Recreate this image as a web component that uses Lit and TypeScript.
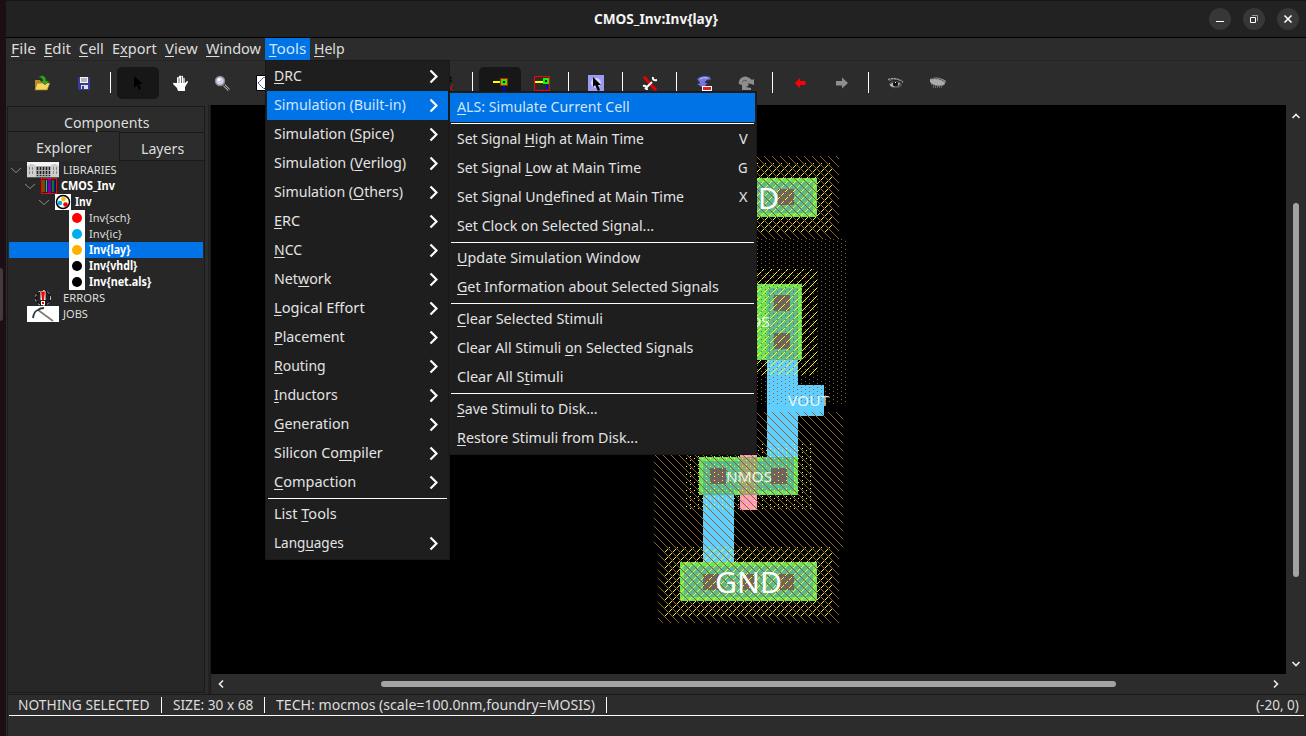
import { LitElement, html, svg, css, nothing } from "lit";
import { customElement, property } from "lit/decorators.js";
import { classMap } from "lit/directives/class-map.js";
import { styleMap } from "lit/directives/style-map.js";

/** Text squeezed or stretched to a given width; `mn` is the index of the underlined mnemonic letter. */
@customElement("fit-label")
class FitLabel extends LitElement {
  static styles = css`
    :host { display: block; flex: none; white-space: pre; }
    .t { display: inline-block; transform-origin: 0 50%; }
    .u { text-decoration: underline; text-underline-offset: 2px; text-decoration-thickness: 1px; text-decoration-skip-ink: none; }
  `;
  @property() text = "";
  @property({ type: Number }) w = 0;
  @property({ type: Number }) mn = -1;
  firstUpdated() {
    const t = this.renderRoot.querySelector(".t") as HTMLElement;
    this.style.width = this.w + "px";
    t.style.transform = `scaleX(${this.w / t.offsetWidth})`;
  }
  render() {
    const { text: s, mn } = this;
    return mn < 0
      ? html`<span class="t">${s}</span>`
      : html`<span class="t">${s.slice(0, mn)}<span class="u">${s[mn]}</span>${s.slice(mn + 1)}</span>`;
  }
}

const label = (text: string, w: number, mn = -1) => html`<fit-label .text=${text} .w=${w} .mn=${mn}></fit-label>`;

/** Single-pixel stipple over a rectangle, kept where `on` holds. */
const stipple = (x0: number, y0: number, x1: number, y1: number, fill: string, on: (x: number, y: number) => boolean) => {
  let d = "";
  for (let y = y0; y < y1; y++) for (let x = x0; x < x1; x++) if (on(x, y)) d += `M${x} ${y}h1v1h-1z`;
  return svg`<path d=${d} fill=${fill} />`;
};
const down = (x: number, y: number) => (x - y + 8000) % 8 === 0;
const up = (x: number, y: number) => (x + y) % 8 === 0;
const sparse = (x: number, y: number) => (y % 4 === 3 && x % 8 === 1) || (y % 4 === 1 && x % 8 === 5);
const dotted = (x: number, y: number) => (y % 4 === 0 && x % 8 === 2) || (y % 4 === 2 && x % 8 === 6);

/** Chip layout drawing. */
@customElement("layout-view")
class LayoutView extends LitElement {
  static styles = css`
    :host { display: block; background: #000; overflow: hidden; }
    svg { display: block; font-family: "Noto Sans", sans-serif; }
  `;
  render() {
    const r = (x: number, y: number, x2: number, y2: number, fill: string) =>
      svg`<rect x=${x} y=${y} width=${x2 - x} height=${y2 - y} fill=${fill} />`;
    const G = "#69e45f", T = "#5abb92", B = "#60cfff", K = "#6c6464", Y = "#ffff00", N = "#8b632e";
    return html`<svg width="1075" height="569" viewBox="211 105 1075 569" shape-rendering="crispEdges">
      ${r(680, 178, 817, 217, G)}${r(684, 182, 813, 213, T)}
      ${r(703, 189, 719, 205, K)}${r(741, 189, 757, 205, K)}${r(778, 189, 794, 205, K)}
      ${r(696, 284, 802, 360, G)}${r(767, 288, 798, 356, T)}
      ${r(767, 356, 798, 458, B)}${r(767, 356, 798, 360, T)}${r(798, 385, 824, 416, B)}
      ${r(774, 295, 790, 311, K)}${r(774, 333, 790, 349, K)}
      ${r(703, 495, 734, 562, B)}
      ${r(740, 455, 757, 510, "#ff9bc0")}
      ${r(699, 457, 798, 495, G)}${r(703, 461, 734, 495, T)}${r(763, 457, 794, 491, T)}${r(734, 461, 763, 491, T)}
      ${r(740, 457, 757, 495, "#9ba57c")}
      ${r(710, 468, 726, 484, K)}${r(771, 468, 787, 484, K)}
      ${r(680, 562, 817, 601, G)}${r(684, 566, 813, 597, T)}
      ${r(703, 574, 719, 590, K)}${r(741, 574, 757, 590, K)}${r(778, 574, 794, 590, K)}
      ${stipple(665, 163, 832, 232, Y, up)}${stipple(680, 269, 817, 375, Y, up)}
      ${stipple(686, 443, 811, 510, Y, dotted)}${stipple(665, 547, 832, 616, Y, up)}
      ${stipple(654, 239, 847, 405, N, sparse)}${stipple(658, 156, 839, 239, N, down)}
      ${stipple(654, 412, 843, 547, N, down)}${stipple(658, 547, 839, 623, N, down)}
      <g fill="#fff">
        <text x="758" y="209" font-size="29">D</text>
        <text x="715" y="593" font-size="29" textLength="67" lengthAdjust="spacingAndGlyphs">GND</text>
        <text x="726" y="482" font-size="15" textLength="46" lengthAdjust="spacingAndGlyphs" opacity=".85">NMOS</text>
        <text x="725" y="327" font-size="15" textLength="45" lengthAdjust="spacingAndGlyphs" opacity=".85">PMOS</text>
        <text x="788" y="406" font-size="15" textLength="41" lengthAdjust="spacingAndGlyphs" opacity=".85">VOUT</text>
      </g>
    </svg>`;
  }
}

const ICONS: Record<string, unknown> = {
  open: svg`<path d="M1 5h5l1 2h7v8H1z" fill="#b98e24"/><path d="M3 8h13l-3 7H1z" fill="#f5d566" stroke="#9a7420" stroke-width=".7"/><path d="M5 2c4-3 7 0 7 4h3l-4 4-4-4h2c0-2-1-3-4-4z" fill="#35a51d" stroke="#176b0c" stroke-width=".5"/>`,
  save: svg`<path d="M2 2h12v13H3l-1-1z" fill="#3a3a9c"/><path d="M4 2h8v6H4z" fill="#f4f4f4"/><path d="M5 4h6M5 6h6" stroke="#777"/><path d="M5 10h7v4H5z" fill="#ddd"/><path d="M6 11h2v3H6z" fill="#3a3a9c"/>`,
  arrow: svg`<path d="M4 1v12l3-3 2 5 2-1-2-5h4z" fill="#000"/>`,
  hand: svg`<path d="M5 8V3q0-1 1-1t1 1V1q1-1 2 0v1q1-2 2-1v2q2-1 2 1v4l2-2q1 0 1 1l-3 5v4H6l-1-3-4-4q0-2 2-1z" fill="#fff"/><path d="M7 3v5M9.500 2v6M12 3v5" stroke="#333" stroke-width=".7"/>`,
  zoom: svg`<path d="M10 10l5 5" stroke="#999" stroke-width="3"/><path d="M10 10l5 5" stroke="#333"/><circle cx="6" cy="6" r="4.500" fill="#cfcfec" stroke="#888" stroke-width="1.500"/><circle cx="5" cy="4.500" r="1.500" fill="#fff"/>`,
  fit: svg`<path d="M.5.5h15v15H.5z" fill="#fff" stroke="#000"/><path d="M2 8l6-6 6 6-6 6z" fill="none" stroke="#228" stroke-dasharray="2 1"/>`,
  grid: svg`<path d="M11 3h3M11 6h3M12 1v7" stroke="#000"/><path d="M15 10l-3 3 3 3" fill="none" stroke="#f00"/>`,
  wire: svg`<path d="M1 6h7v2H1z" fill="#ff0"/><path d="M11 11h2v5h-2z" fill="#00f"/><path d="M8 3h8v8H8z" fill="#f00"/><path d="M9 4h6v6H9z" fill="#0f0"/><path d="M11 6h2v2h-2z" fill="#000"/>`,
  wirebox: svg`<path d="M.5 1.500h15v14H.5z" fill="none" stroke="#f00"/><path d="M1 6h8v2H1z" fill="#ff0"/><path d="M12 10h2v4h-2z" fill="#00f"/><path d="M9 3h6v6H9z" fill="#0f0"/><path d="M11 5h2v2h-2z" fill="#000"/>`,
  select: svg`<path d="M0 0h16v16H0z" fill="#9b9bf4"/><circle cx="8" cy="8" r="5" fill="#d5d5ff"/><path d="M5 2v10l2-2 3 6 2-1-2-5h3z" fill="#000"/>`,
  tools: svg`<path d="M1 1l3 1 7 8-2 2-7-8z" fill="#e00"/><path d="M10 11l4 4" stroke="#e00" stroke-width="3"/><path d="M11 2q-1 4 4 3M3 14l7-7M1 11q4-1 4 4" fill="none" stroke="#fff" stroke-width="2"/>`,
  undo: svg`<path d="M1 4q5-5 13-2l1 3q-5-1-6 3h3l-5 5-6-4 3-1z" fill="#7777d5" stroke="#33338a" stroke-width=".6"/><path d="M4 4q3-2 8-1" stroke="#c4c4f4" fill="none"/><path d="M6 11h10v5H6z" fill="#fff"/><path d="M7 12h8v3H7z" fill="#d22"/>`,
  redo: svg`<path d="M16 4l-2 1Q8-1 3 3 0 6 1 9l3 1v5h9v-2l-5-1q4-1 2-4l6 2z" fill="#8e8e8e"/><path d="M4 7q2-3 5-1" stroke="#555" fill="none"/>`,
  back: svg`<path d="M3 8l5-5v3h5.500v4H8v3z" fill="#f00"/>`,
  fwd: svg`<path d="M14 8L8 2.500V6H2v4.500h6v3z" fill="#8e8e8e"/>`,
  eye: svg`<path d="M0 5q4-3 9-2t7 4l-3 1 1 2q-3 4-8 3-4-1-5-4l1-2z" fill="#555"/><path d="M0 4.500q7-3 15 3" stroke="#bbb" stroke-dasharray="2 1" fill="none"/><path d="M2 9.500Q6 6 12 8.500q-2 3.500-6 3.500T2 9.500z" fill="#bdbdbd"/><circle cx="7.500" cy="9" r="2.600" fill="#111"/><path d="M7 7h1v1H7z" fill="#fff"/><path d="M1 7.500q6-4 13 0" stroke="#1a1a1a" fill="none"/>`,
  shut: svg`<path d="M0 4q7-4 16 2l-2 4q-7 2-12-1L0 7z" fill="#aaa"/><path d="M1 4q7-2 14 3" stroke="#555" fill="none"/><path d="M1 9q7 4 14 0M3 12h10" stroke="#999" stroke-dasharray="1 1" fill="none"/>`,
};

type Tool = string | { gap: number };
const TOOLS: Tool[] = ["open", "save", "|", "*arrow", "hand", "zoom", "fit", { gap: 140 }, "grid", "|", "*wire", "wirebox", "|", "select", "|", "tools", "|", "undo", "redo", "|", "back", "fwd", "|", "eye", "shut"];

@customElement("tool-bar")
class ToolBar extends LitElement {
  static styles = css`
    :host { display: flex; height: 45px; padding: 6px 0 0 15px; box-sizing: border-box; border-top: 1px solid #262626; background: #2c2c2c; }
    .b { width: 42px; height: 32px; display: grid; place-items: center; border-radius: 5px; box-sizing: border-box; }
    .on { background: #171717; }
    .sep { width: 1px; height: 21px; margin: 5px 6px 0 5px; background: #fff; }
    svg { width: 16px; height: 16px; display: block; }
  `;
  render() {
    return TOOLS.map(t =>
      typeof t !== "string"
        ? html`<div style=${styleMap({ width: t.gap + "px" })}></div>`
        : t === "|"
          ? html`<div class="sep"></div>`
          : html`<div class=${classMap({ b: true, on: t[0] === "*" })}><svg viewBox="0 0 16 16">${ICONS[t.replace("*", "")]}</svg></div>`);
  }
}

type Item = null | { t: string; w: number; m?: number; key?: string; kw?: number; sub?: boolean; hot?: boolean };

@customElement("pop-menu")
class PopMenu extends LitElement {
  static styles = css`
    :host { display: block; box-sizing: border-box; background: #1e1e1e; border: 1px solid #181818; padding: 1px; color: #e3e3e3; font: 14.5px/27px "Noto Sans", sans-serif; }
    .i { display: flex; justify-content: space-between; height: 29px; padding: 0 7px; }
    .hot { background: #0073e6; color: #cfe5fb; }
    .s { height: 1px; margin: 1px; background: #fff; }
    svg { width: 9px; height: 15px; margin: 7px 3px 0 0; }
  `;
  @property({ attribute: false }) items: Item[] = [];
  render() {
    return this.items.map(i => i === null
      ? html`<div class="s"></div>`
      : html`<div class=${classMap({ i: true, hot: !!i.hot })}>${label(i.t, i.w, i.m ?? -1)}
          ${i.key ? label(i.key, i.kw!) : nothing}
          ${i.sub ? html`<svg viewBox="0 0 9 15"><path d="M1.500 1.500l6 6-6 6" fill="none" stroke="#fff" stroke-width="2.200"/></svg>` : nothing}
        </div>`);
  }
}

const s = (t: string, w: number, m?: number, hot = false): Item => ({ t, w, m, sub: true, hot });
const MAIN: Item[] = [
  s("DRC", 28, 0), s("Simulation (Built-in)", 132, undefined, true), s("Simulation (Spice)", 120, 12), s("Simulation (Verilog)", 132, 12),
  s("Simulation (Others)", 129, 12), s("ERC", 26, 0), s("NCC", 28, 0), s("Network", 57, 3), s("Logical Effort", 91, 0), s("Placement", 71, 0),
  s("Routing", 52, 0), s("Inductors", 64, 0), s("Generation", 75, 0), s("Silicon Compiler", 109, 10), s("Compaction", 82, 0),
  null, { t: "List Tools", w: 63, m: 5 }, s("Languages", 70, 4),
];
const SUB: Item[] = [
  { t: "ALS: Simulate Current Cell", w: 173, m: 0, hot: true }, null,
  { t: "Set Signal High at Main Time", w: 187, m: 11, key: "V", kw: 9 },
  { t: "Set Signal Low at Main Time", w: 184, m: 11, key: "G", kw: 10 },
  { t: "Set Signal Undefined at Main Time", w: 227, m: 13, key: "X", kw: 9 },
  { t: "Set Clock on Selected Signal...", w: 197 }, null,
  { t: "Update Simulation Window", w: 183, m: 0 }, { t: "Get Information about Selected Signals", w: 262, m: 0 }, null,
  { t: "Clear Selected Stimuli", w: 146, m: 0 }, { t: "Clear All Stimuli on Selected Signals", w: 236, m: 18 }, { t: "Clear All Stimuli", w: 106, m: 11 }, null,
  { t: "Save Stimuli to Disk...", w: 141, m: 0 }, { t: "Restore Stimuli from Disk...", w: 181, m: 0 },
];

const dot = (c: string) => html`<svg width="16" height="16"><path d="M0 0h16v16H0z" fill="#fff"/><circle cx="8" cy="8" r="5" fill=${c} /></svg>`;
const TREE_ICONS: Record<string, unknown> = {
  lib: html`<svg width="32" height="16"><path d="M0 0h32v16H0z" fill="#f4f4f4"/><path d="M0 4l3-2h3l3 2h14l3-2h3l3 2v11H0z" fill="#cfcfcf"/><path d="M2.500 5v8M5.500 5v8M26.500 5v8M29.500 5v8" stroke="#888" stroke-dasharray="3 1"/><path d="M9 4h14v11H9z" fill="#aaa"/><path d="M10.500 5v9M13.500 5v9M16.500 5v9M19.500 5v9M22.500 5v9" stroke="#222" stroke-width="1.500" stroke-dasharray="3 1"/><path d="M0 15.500h32" stroke="#555"/></svg>`,
  book: html`<svg width="16" height="16"><path d="M0 0h16v16H0z" fill="#f00"/><path d="M1 1h14v14H1z" fill="#222"/><path d="M1 2h3v12H1z" fill="#7b4a00"/><path d="M5 2h1v12H5z" fill="#2aaee8"/><path d="M7 1h3v14H7z" fill="#7300a8"/><path d="M11 2h2v12h-2z" fill="#0a7a1c"/><path d="M14 2h1v13h-1z" fill="#00c"/></svg>`,
  cell: html`<svg width="16" height="16"><path d="M0 0h16v16H0z" fill="#fff"/><circle cx="8" cy="8" r="6.500" fill="#fff" stroke="#000" stroke-width="1.500"/><circle cx="8.500" cy="5" r="2.300" fill="#fb0"/><circle cx="5" cy="9" r="2.300" fill="#00aeef"/><circle cx="10.500" cy="10.500" r="2.300" fill="#e00"/></svg>`,
  err: html`<svg width="32" height="16"><circle cx="16" cy="8" r="7" fill="#222" stroke="#000"/><circle cx="16" cy="8" r="7.500" fill="none" stroke="#fff" stroke-width=".8" stroke-dasharray="2 3"/><path d="M13.500 1h5v9h-5zM14 11h4v4h-4z" fill="#fff"/><path d="M14 1.500h4l-1 8.500h-2zM15 12h2v2h-2z" fill="#f00"/></svg>`,
  job: html`<svg width="32" height="16"><path d="M0 0h32v16H0z" fill="#fff"/><path d="M11 4l15 11" stroke="#7c7c68" stroke-width="1.600"/><path d="M6 12Q7 5 11 4q2-2 6-2" fill="none" stroke="#2a3a3a" stroke-width="1.800"/></svg>`,
  sch: dot("#f00"), ic: dot("#00aeef"), lay: dot("#ffb000"), blk: dot("#000"),
};
const ROWS = [
  { d: 0, i: "lib", t: "LIBRARIES", w: 54, open: true },
  { d: 1, i: "book", t: "CMOS_Inv", w: 54, b: true, open: true },
  { d: 2, i: "cell", t: "Inv", w: 17, b: true, open: true },
  { d: 3, i: "sch", t: "Inv{sch}", w: 42 },
  { d: 3, i: "ic", t: "Inv{ic}", w: 33 },
  { d: 3, i: "lay", t: "Inv{lay}", w: 41, b: true, hot: true },
  { d: 3, i: "blk", t: "Inv{vhdl}", w: 48, b: true },
  { d: 3, i: "blk", t: "Inv{net.als}", w: 62, b: true },
  { d: 0, i: "err", t: "ERRORS", w: 42 },
  { d: 0, i: "job", t: "JOBS", w: 25 },
];

@customElement("side-panel")
class SidePanel extends LitElement {
  static styles = css`
    :host { display: flex; flex-direction: column; box-sizing: border-box; width: 198px; height: 587px; border: 1px solid #1a1a1a; background: #272727; color: #ddd; font: 14.500px "Noto Sans", sans-serif; }
    .comp { height: 24px; display: flex; justify-content: center; background: #2c2c2c; line-height: 30px; }
    .tabs { display: flex; height: 30px; background: #2c2c2c; }
    .ex { width: 111px; border-top: 1px solid #1a1a1a; display: flex; justify-content: center; line-height: 31px; }
    .ly { flex: 1; margin-top: 1px; height: 27px; border: 1px solid #1a1a1a; border-right: 0; display: flex; justify-content: center; line-height: 31px; }
    .tree { display: flex; flex-direction: column; padding: 1px 1px 0; font-size: 11.5px; line-height: 16px; }
    .row { display: flex; height: 16px; }
    .b { font-weight: 700; color: #fff; }
    .hot { background: #0073e6; }
    .tw { width: 18px; height: 16px; flex: none; }
    .ic { flex: none; height: 16px; margin-right: 4px; }
    svg { display: block; }
  `;
  render() {
    return html`
      <div class="comp">${label("Components", 85)}</div>
      <div class="tabs"><div class="ex">${label("Explorer", 56)}</div><div class="ly">${label("Layers", 43)}</div></div>
      <div class="tree">${ROWS.map(r => html`
        <div class=${classMap({ row: true, b: !!r.b, hot: !!r.hot })}>
          <div style=${styleMap({ width: r.d * 14 + "px" })}></div>
          <div class="tw">${r.open ? html`<svg width="14" height="16"><path d="M2 6l5 4.500L12 6" fill="none" stroke="#8a8a8a"/></svg>` : nothing}</div>
          <div class="ic">${TREE_ICONS[r.i]}</div>
          ${label(r.t, r.w)}
        </div>`)}</div>`;
  }
}

const MENUS: [string, number][] = [["File", 25], ["Edit", 27], ["Cell", 25], ["Export", 45], ["View", 33], ["Window", 55], ["Tools", 37], ["Help", 31]];

@customElement("app-root")
class AppRoot extends LitElement {
  static styles = css`
    :host { display: flex; position: relative; width: 1306px; height: 736px; overflow: hidden; background: #1d0f15; font: 14.5px "Noto Sans", sans-serif; color: #ddd; }
    .edge { width: 6px; flex: none; padding-top: 268px; box-sizing: border-box; background: #1b0f15; }
    .dock { width: 3px; height: 53px; background: #433a40; border-radius: 0 4px 4px 0; }
    .win { width: 1300px; height: 736px; background: #2c2c2c; }
    .title { box-sizing: border-box; border-top: 1px solid #151515; display: flex; align-items: center; background: #222; border-bottom: 1px solid #000; height: 38px; color: #f4f4f4; font: 700 14.5px/18px "Noto Sans", sans-serif; padding-left: 588px; }
    .name { padding-bottom: 2px; }
    .ctl { display: flex; gap: 12px; margin-left: auto; padding-right: 7px; }
    .menu { display: flex; height: 22px; line-height: 20px; padding-left: 1px; }
    .mi { padding: 0 4px; }
    .mon { background: #0073e6; color: #cfe5fb; }
    .body { display: flex; height: 589px; }
    .side { padding: 1px 0 0 1px; width: 202px; flex: none; box-sizing: border-box; }
    .div { width: 3px; background: #222; border-right: 1px solid #1a1a1a; box-sizing: border-box; height: 589px; }
    .view { display: grid; grid-template-columns: 1075px 20px; grid-template-rows: 569px 20px; }
    .vs { display: flex; flex-direction: column; align-items: center; }
    .hs { display: flex; align-items: center; }
    .vt { width: 6px; height: 374px; border-radius: 3px; background: #a3a3a3; margin-top: 82px; }
    .ht { width: 735px; height: 6px; border-radius: 3px; background: #a3a3a3; margin-left: 155px; }
    .up { margin-top: 6px; } .down { margin-top: auto; margin-bottom: 5px; }
    .lf { margin-left: 5px; } .rt { margin-left: auto; margin-right: 5px; }
    .status { border-top: 1px solid #1a1a1a; border-left: 1px solid #1a1a1a; height: 42px; margin-left: 1px; box-sizing: border-box; padding: 1px 2px 0 1px; }
    .line { display: flex; height: 20px; line-height: 16px; border-bottom: 1px solid #fff; padding-left: 9px; padding-right: 5px; box-sizing: border-box; }
    .vsep { width: 1px; height: 16px; margin: 1px 11px 0; background: #fff; }
    .pos { margin-left: auto; }
    .m1 { position: absolute; left: 265px; top: 60px; width: 185px; height: 500px; }
    .m2 { position: absolute; left: 448px; top: 91px; width: 309px; height: 364px; }
    svg { display: block; }
  `;
  render() {
    const chev = (d: string, cls: string) => html`<svg class=${cls} width="10" height="10"><path d=${d} fill="none" stroke="#eee" stroke-width="1.600"/></svg>`;
    return html`
      <div class="edge"><div class="dock"></div></div>
      <div class="win">
        <div class="title"><div class="name">${label("CMOS_Inv:Inv{lay}", 124)}</div>
          <div class="ctl">
            <svg width="22" height="22"><circle cx="11" cy="11" r="11" fill="#373737"/><path d="M7 13.500h8" stroke="#fff"/></svg>
            <svg width="22" height="22"><circle cx="11" cy="11" r="11" fill="#373737"/><path d="M7.500 9.500h5v5h-5z" fill="none" stroke="#fff"/><path d="M9 7.500h5.500V13" fill="none" stroke="#999"/></svg>
            <svg width="22" height="22"><circle cx="11" cy="11" r="11" fill="#373737"/><path d="M7.500 7.500l7 7M14.500 7.500l-7 7" stroke="#fff" stroke-width="1.600"/></svg>
          </div>
        </div>
        <div class="menu">${MENUS.map(([t, w]) => html`<div class=${classMap({ mi: true, mon: t === "Tools" })}>${label(t, w, t === "Export" ? 1 : 0)}</div>`)}</div>
        <tool-bar></tool-bar>
        <div class="body">
          <div class="side"><side-panel></side-panel></div>
          <div class="div"></div>
          <div class="view">
            <layout-view></layout-view>
            <div class="vs">${chev("M1.500 7L5 3.500 8.500 7", "up")}<div class="vt"></div>${chev("M1.500 3L5 6.500 8.500 3", "down")}</div>
            <div class="hs">${chev("M7 1.500L3.500 5 7 8.500", "lf")}<div class="ht"></div>${chev("M3 1.500L6.500 5 3 8.500", "rt")}</div>
          </div>
        </div>
        <div class="status"><div class="line">
          ${label("NOTHING SELECTED", 132)}<div class="vsep"></div>${label("SIZE: 30 x 68", 80)}<div class="vsep"></div>${label("TECH: mocmos (scale=100.0nm,foundry=MOSIS)", 319)}<div class="vsep"></div>
          <div class="pos">${label("(-20, 0)", 43)}</div>
        </div></div>
      </div>
      <pop-menu class="m1" .items=${MAIN}></pop-menu>
      <pop-menu class="m2" .items=${SUB}></pop-menu>`;
  }
}
